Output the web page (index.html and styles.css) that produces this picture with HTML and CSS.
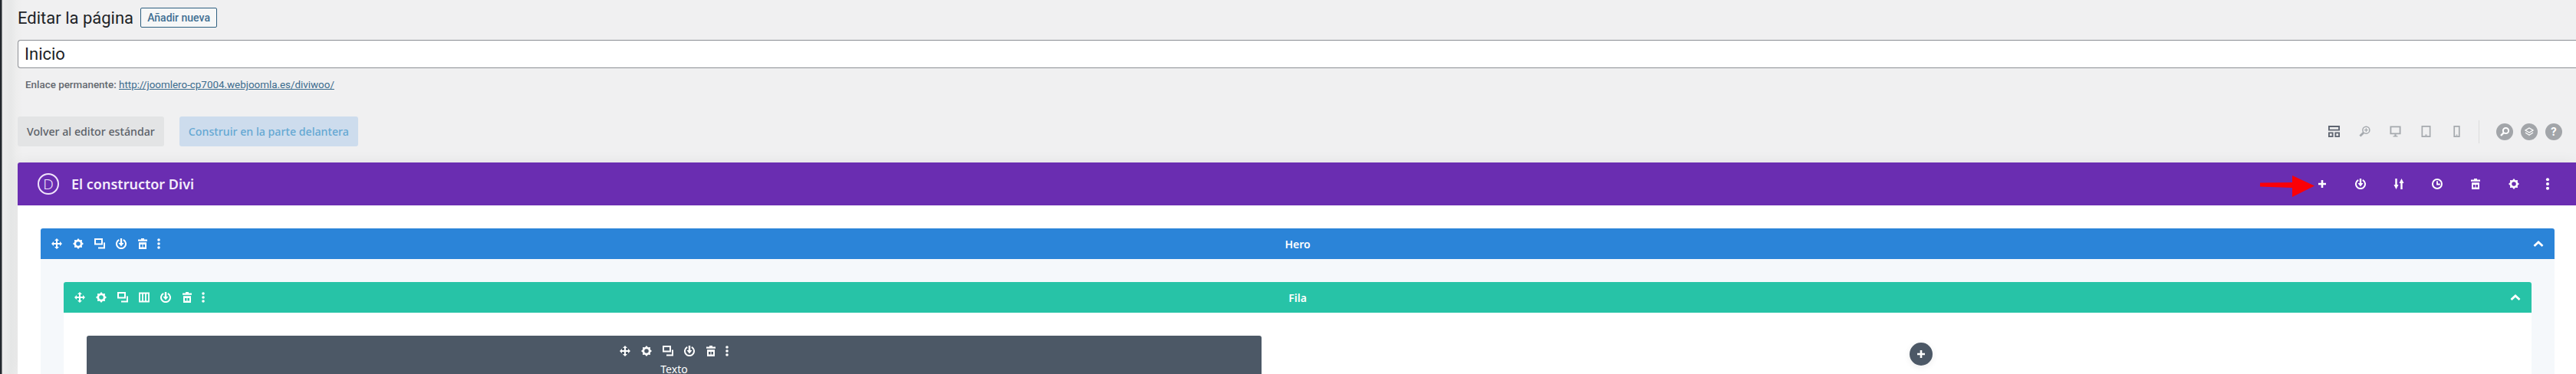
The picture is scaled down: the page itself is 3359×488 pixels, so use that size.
FILE: index.html
```html
<!DOCTYPE html>
<html lang="es">
<head>
    <meta charset="UTF-8">
    <meta name="viewport" content="width=device-width, initial-scale=1.0">
    <title>Editar la página</title>
    <link rel="stylesheet" href="styles.css">
</head>
<body>
    <svg class="icon-defs" xmlns="http://www.w3.org/2000/svg">
        <symbol id="i-move" viewBox="0 0 14 14"><path d="M7 2v10M2 7h10" fill="none" stroke="currentColor" stroke-width="2"/><path d="M7 0l3 3H4zM7 14l-3-3h6zM0 7l3-3v6zM14 7l-3 3V4z" fill="currentColor"/></symbol>
        <symbol id="i-gear" viewBox="0 0 14 14"><path fill="currentColor" fill-rule="evenodd" d="M14 7l-2.2 2 .15 2.95L9 11.8 7 14l-2-2.2-2.95.15L2.2 9 0 7l2.2-2-.15-2.95L5 2.200 7 0l2 2.200 2.950-.15L11.800 5zM9.800 7a2.800 2.800 0 1 0-5.600 0 2.800 2.800 0 1 0 5.600 0z"/></symbol>
        <symbol id="i-clone" viewBox="0 0 14 14"><path d="M1 1h9v6.500H1zM13 5.500V12.500H5" fill="none" stroke="currentColor" stroke-width="2"/></symbol>
        <symbol id="i-power" viewBox="0 0 14 14"><path d="M4.200 1.800A6 6 0 1 0 9.800 1.800" fill="none" stroke="currentColor" stroke-width="2"/><path d="M7 0v7" stroke="currentColor" stroke-width="2.400"/><path d="M3.500 6h7L7 10.500z" fill="currentColor"/></symbol>
        <symbol id="i-trash" viewBox="0 0 14 14"><path fill="currentColor" fill-rule="evenodd" d="M5 0h4v1.500h4v2.300H1V1.500h4zM2 5.200h10V14H2zM4 8v3.500h2.500V8zM7.500 8v3.500H10V8z"/></symbol>
        <symbol id="i-dots" viewBox="0 0 14 14"><circle cx="7" cy="2" r="1.800" fill="currentColor"/><circle cx="7" cy="7" r="1.800" fill="currentColor"/><circle cx="7" cy="12" r="1.800" fill="currentColor"/></symbol>
        <symbol id="i-cols" viewBox="0 0 14 14"><path d="M1 1.500h12v11H1zM5 1.500v11M9 1.500v11" fill="none" stroke="currentColor" stroke-width="1.800"/></symbol>
        <symbol id="i-plus" viewBox="0 0 14 14"><path d="M7 2v10M2 7h10" fill="none" stroke="currentColor" stroke-width="2.600"/></symbol>
        <symbol id="i-sort" viewBox="0 0 14 14"><path d="M3.500 0v9M10.500 14V5" stroke="currentColor" stroke-width="2.400"/><path d="M.5 8h6l-3 6zM7.500 6h6l-3-6z" fill="currentColor"/></symbol>
        <symbol id="i-history" viewBox="0 0 14 14"><circle cx="7" cy="7" r="6" fill="none" stroke="currentColor" stroke-width="2"/><path d="M7 3.200v4.300h3.800" fill="none" stroke="currentColor" stroke-width="1.800"/></symbol>
        <symbol id="i-chevron" viewBox="0 0 14 14"><path d="M1.500 10L7 5l5.500 5" fill="none" stroke="currentColor" stroke-width="2.800"/></symbol>
        <symbol id="i-layout" viewBox="0 0 16 16"><path d="M1 1h14v5H1zM1 10h5v5H1zM10 10h5v5h-5z" fill="none" stroke="currentColor" stroke-width="2"/></symbol>
        <symbol id="i-zoom" viewBox="0 0 16 16"><circle cx="10" cy="6" r="4.800" fill="none" stroke="currentColor" stroke-width="1.600"/><path d="M6.500 9.500L1.500 14.500" stroke="currentColor" stroke-width="3"/><path d="M10 3.500v5M7.500 6h5" stroke="currentColor" stroke-width="1.300"/></symbol>
        <symbol id="i-desktop" viewBox="0 0 16 16"><path d="M1.500 1.500h13v9.500h-13z" fill="none" stroke="currentColor" stroke-width="2"/><path d="M6.800 12h2.400v2h2v1.500H4.800V14h2z" fill="currentColor"/></symbol>
        <symbol id="i-tablet" viewBox="0 0 16 16"><path d="M2.500 1h11v14h-11z" fill="none" stroke="currentColor" stroke-width="1.800"/><path d="M6.500 13h3" stroke="currentColor" stroke-width="1.200"/></symbol>
        <symbol id="i-phone" viewBox="0 0 16 16"><path d="M4.500 1h7v14h-7z" fill="none" stroke="currentColor" stroke-width="1.800"/><path d="M7 13h2" stroke="currentColor" stroke-width="1.200"/></symbol>
        <symbol id="i-search" viewBox="0 0 14 14"><circle cx="8.500" cy="5.500" r="3.600" fill="none" stroke="currentColor" stroke-width="2"/><path d="M5.800 8.200L2 12" stroke="currentColor" stroke-width="2.400"/></symbol>
        <symbol id="i-layers" viewBox="0 0 14 14"><path d="M7 2l5 3-5 3-5-3z" fill="none" stroke="currentColor" stroke-width="1.300"/><path d="M2 8l5 3.300L12 8" fill="none" stroke="currentColor" stroke-width="1.300"/></symbol>
    </svg>

    <div class="title-row">
        <h1 class="page-title">Editar la página</h1>
        <a class="add-new" href="#">Añadir nueva</a>
    </div>

    <input class="title-input" type="text" value="Inicio">

    <p class="permalink"><strong>Enlace permanente:</strong> <a href="#">http://joomlero-cp7004.webjoomla.es/diviwoo/</a></p>

    <div class="builder-actions">
        <a class="btn btn-gray" href="#">Volver al editor estándar</a>
        <a class="btn btn-blue" href="#">Construir en la parte delantera</a>
        <div class="view-tools">
            <svg class="view-icon dark"><use href="#i-layout"/></svg>
            <svg class="view-icon"><use href="#i-zoom"/></svg>
            <svg class="view-icon"><use href="#i-desktop"/></svg>
            <svg class="view-icon"><use href="#i-tablet"/></svg>
            <svg class="view-icon"><use href="#i-phone"/></svg>
            <span class="view-divider"></span>
            <div class="round-tools">
                <span class="round-btn"><svg class="icon"><use href="#i-search"/></svg></span>
                <span class="round-btn"><svg class="icon"><use href="#i-layers"/></svg></span>
                <span class="round-btn">?</span>
            </div>
        </div>
    </div>

    <div class="builder">
        <div class="builder-head">
            <span class="divi-logo">D</span>
            <span class="builder-name">El constructor Divi</span>
            <div class="head-tools">
                <svg class="icon"><use href="#i-plus"/></svg>
                <svg class="icon"><use href="#i-power"/></svg>
                <svg class="icon"><use href="#i-sort"/></svg>
                <svg class="icon"><use href="#i-history"/></svg>
                <svg class="icon"><use href="#i-trash"/></svg>
                <svg class="icon"><use href="#i-gear"/></svg>
                <svg class="icon dots"><use href="#i-dots"/></svg>
            </div>
            <svg class="red-arrow" viewBox="0 0 72 30"><path d="M1 10.500L43 10V1l29 13.500L43 29V17L1 15.500z" fill="#fb0007"/></svg>
        </div>

        <div class="builder-body">
            <!-- Section -->
            <div class="bar bar-section">
                <div class="tools">
                    <svg class="icon"><use href="#i-move"/></svg>
                    <svg class="icon"><use href="#i-gear"/></svg>
                    <svg class="icon"><use href="#i-clone"/></svg>
                    <svg class="icon"><use href="#i-power"/></svg>
                    <svg class="icon"><use href="#i-trash"/></svg>
                    <svg class="icon dots"><use href="#i-dots"/></svg>
                </div>
                <span class="bar-name">Hero</span>
                <svg class="icon chevron"><use href="#i-chevron"/></svg>
            </div>
            <div class="section-body">
                <!-- Row -->
                <div class="bar bar-row">
                    <div class="tools">
                        <svg class="icon"><use href="#i-move"/></svg>
                        <svg class="icon"><use href="#i-gear"/></svg>
                        <svg class="icon"><use href="#i-clone"/></svg>
                        <svg class="icon"><use href="#i-cols"/></svg>
                        <svg class="icon"><use href="#i-power"/></svg>
                        <svg class="icon"><use href="#i-trash"/></svg>
                        <svg class="icon dots"><use href="#i-dots"/></svg>
                    </div>
                    <span class="bar-name">Fila</span>
                    <svg class="icon chevron"><use href="#i-chevron"/></svg>
                </div>
                <div class="row-body">
                    <div class="module">
                        <div class="tools module-tools">
                            <svg class="icon"><use href="#i-move"/></svg>
                            <svg class="icon"><use href="#i-gear"/></svg>
                            <svg class="icon"><use href="#i-clone"/></svg>
                            <svg class="icon"><use href="#i-power"/></svg>
                            <svg class="icon"><use href="#i-trash"/></svg>
                            <svg class="icon dots"><use href="#i-dots"/></svg>
                        </div>
                        <span class="module-name">Texto</span>
                    </div>
                    <div class="empty-col">
                        <span class="add-module"><svg class="icon"><use href="#i-plus"/></svg></span>
                    </div>
                </div>
            </div>
        </div>
    </div>
</body>
</html>
```

FILE: styles.css
```css
html, body {
    height: 488px;
    overflow: hidden;
}
body {
    margin: 0;
    padding-left: 23px;
    box-sizing: border-box;
    background: linear-gradient(90deg, #23282d 0, #23282d 2px, #ececec 3px, #e7e8e8 14px, #eeeeee 22px, #f0f0f1 30px);
    font-family: "Noto Sans", sans-serif;
    color: #23282d;
}

.icon-defs {
    display: none;
}
.icon {
    display: block;
    width: 14px;
    height: 14px;
    flex: none;
    color: #fff;
}

/* top of the page */
.title-row {
    display: flex;
    align-items: center;
    gap: 9px;
    height: 26px;
    padding-top: 10px;
}
.page-title {
    margin: 0;
    font-family: Roboto, sans-serif;
    font-size: 22px;
    font-weight: 400;
    color: #1d2327;
}
.add-new {
    display: flex;
    align-items: center;
    justify-content: center;
    width: 98px;
    height: 24px;
    border: 1px solid #2f6080;
    border-radius: 2px;
    background: #f6f7f7;
    font-family: Roboto, sans-serif;
    font-size: 14px;
    font-weight: 500;
    color: #3f6f92;
    text-decoration: none;
}
.title-input {
    display: block;
    box-sizing: border-box;
    width: 100%;
    height: 37px;
    margin: 16px 0 0;
    padding: 0 8px;
    border: 1px solid #8c8f94;
    border-right: 0;
    border-radius: 4px 0 0 4px;
    background: #fff;
    font-family: Roboto, sans-serif;
    font-size: 22px;
    color: #1d2327;
}
.permalink {
    margin: 13px 0 0 10px;
    height: 18px;
    font-family: Roboto, sans-serif;
    font-size: 13.4px;
    line-height: 18px;
    color: #646970;
}
.permalink strong {
    font-weight: 500;
}
.permalink a {
    color: #3a6b8d;
}

/* buttons + view tools */
.builder-actions {
    display: flex;
    align-items: center;
    gap: 20px;
    height: 39px;
    margin-top: 32px;
}
.btn {
    display: flex;
    align-items: center;
    height: 39px;
    padding: 0 12px;
    border-radius: 3px;
    font-size: 14.2px;
    font-weight: 500;
    text-decoration: none;
}
.btn-gray {
    background: #e3e4e5;
    color: #5b6168;
}
.btn-blue {
    background: #cddced;
    color: #65a8d3;
}
.view-tools {
    display: flex;
    align-items: center;
    gap: 25px;
    margin-left: auto;
    margin-right: 18px;
}
.view-icon {
    width: 15px;
    height: 15px;
    color: #a5a9ae;
}
.view-icon.dark {
    color: #5e6470;
}
.view-divider {
    width: 1px;
    height: 30px;
    margin-left: -4px;
    background: #dcdcdc;
}
.round-tools {
    display: flex;
    gap: 10px;
    margin-left: -3px;
}
.round-btn {
    display: flex;
    align-items: center;
    justify-content: center;
    width: 22px;
    height: 22px;
    border-radius: 50%;
    background: #a2a5a9;
    font-family: Inter, sans-serif;
    font-size: 14px;
    font-weight: 700;
    color: #fff;
}

/* builder */
.builder {
    margin-top: 21px;
    box-shadow: 0 0 18px rgba(0, 0, 0, 0.06);
}
.builder-head {
    position: relative;
    display: flex;
    align-items: center;
    height: 56px;
    padding: 0 29px 0 26px;
    border-radius: 3px 0 0 0;
    background: #6a2db1;
}
.divi-logo {
    display: flex;
    align-items: center;
    justify-content: center;
    box-sizing: border-box;
    width: 28px;
    height: 28px;
    border: 2px solid #f0e4fb;
    border-radius: 50%;
    font-size: 19px;
    font-weight: 300;
    color: #f0e4fb;
}
.builder-name {
    margin-left: 16px;
    font-size: 18px;
    font-weight: 600;
    color: #f3ecfb;
}
.head-tools {
    display: flex;
    align-items: center;
    gap: 36px;
    margin-left: auto;
}
.head-tools .dots {
    width: 16px;
    height: 16px;
    margin-left: -7px;
}
.red-arrow {
    position: absolute;
    left: 2923px;
    top: 16px;
    width: 72px;
    height: 30px;
}

.builder-body {
    box-sizing: border-box;
    height: 220px;
    padding: 30px 28px 0 30px;
    background: #fff;
}
.bar {
    display: grid;
    grid-template-columns: 1fr auto 1fr;
    align-items: center;
    height: 40px;
    padding: 0 14px;
    border-radius: 3px 3px 0 0;
    color: #fff;
}
.bar-section {
    background: #2b84d8;
}
.bar-row {
    background: #27c3a7;
}
.bar-name {
    font-size: 14px;
    font-weight: 600;
}
.chevron {
    justify-self: end;
}
.tools {
    display: flex;
    align-items: center;
    gap: 14px;
}
.tools .dots {
    margin-left: -7px;
}
.section-body {
    box-sizing: border-box;
    height: 150px;
    padding: 30px 30px 0;
    background: #f5f8fb;
}
.row-body {
    box-sizing: border-box;
    display: grid;
    grid-template-columns: 1532px 1532px;
    justify-content: space-between;
    height: 80px;
    padding: 30px 30px 0;
    background: #fff;
}
.module {
    display: flex;
    flex-direction: column;
    align-items: center;
    box-sizing: border-box;
    height: 50px;
    padding-top: 13px;
    overflow: hidden;
    border-radius: 3px 3px 0 0;
    background: #4c5866;
    color: #fff;
}
.module-tools {
    padding-left: 4px;
}
.module-name {
    margin-top: 7px;
    font-size: 14px;
    line-height: 20px;
}
.empty-col {
    display: flex;
    justify-content: center;
    padding-top: 9px;
}
.add-module {
    display: flex;
    align-items: center;
    justify-content: center;
    width: 30px;
    height: 30px;
    border-radius: 50%;
    background: #4c5866;
    box-shadow: 0 2px 8px rgba(0, 0, 0, 0.08);
}
```
